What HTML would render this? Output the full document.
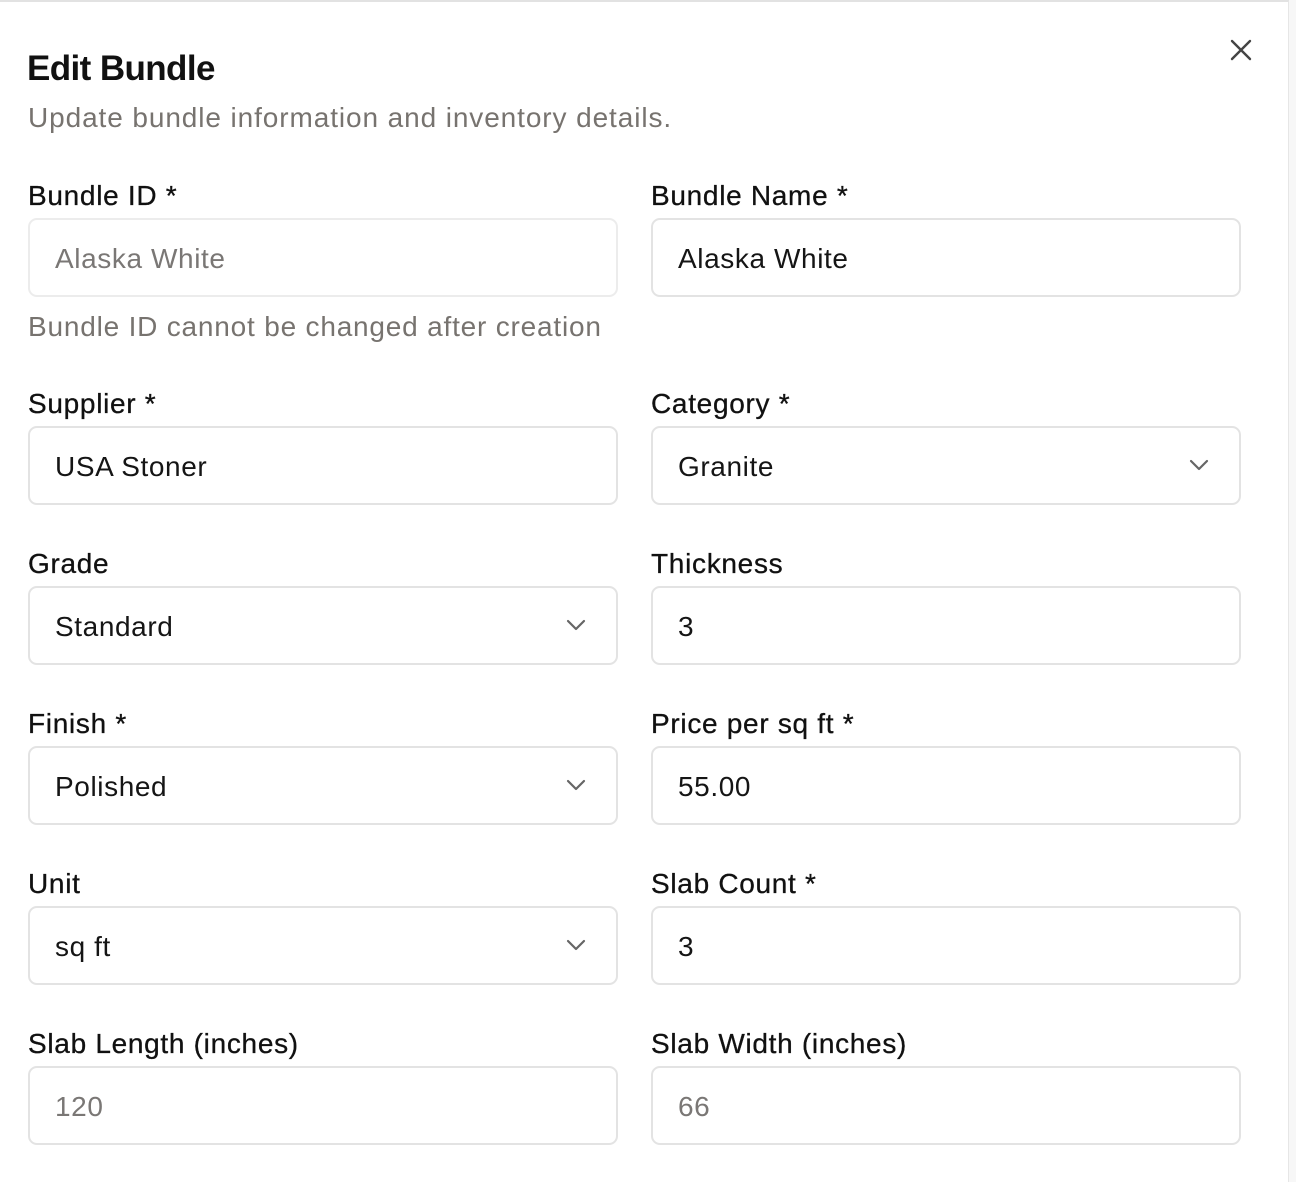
<!DOCTYPE html>
<html><head><meta charset="utf-8"><style>
html,body{margin:0;padding:0;}
body{width:1296px;height:1182px;position:relative;overflow:hidden;background:#f7f7f7;font-family:"Liberation Sans",Arial,sans-serif;}
.modal{position:absolute;left:0;top:0;width:1289px;height:1182px;background:#fff;border-top:2px solid #e2e2e2;border-right:1px solid #e6e6e6;box-sizing:border-box;}
.t{position:absolute;white-space:nowrap;line-height:1;}
.title{left:27px;top:49px;font-size:35px;font-weight:bold;color:#111;letter-spacing:-0.6px;}
.sub{left:28px;top:102px;font-size:28px;letter-spacing:0.9px;color:#77736f;}
.lbl{font-size:28px;letter-spacing:0.7px;color:#111;-webkit-text-stroke:0.3px #111;}
.help{font-size:28px;letter-spacing:0.8px;color:#77736f;}
.in{position:absolute;width:590px;height:79px;box-sizing:border-box;border:2px solid #e3e3e3;border-radius:9px;background:#fff;}
.in span{position:absolute;left:25px;top:25px;font-size:28px;letter-spacing:0.6px;line-height:1;color:#151515;white-space:nowrap;}
.in.dis span,.in.ph span{color:#7a7775;}
.in.dis{border-color:#ececec;}
.in svg{position:absolute;right:30px;top:31px;}
</style></head><body>
<div class="modal">
<svg style="position:absolute;left:1230px;top:37px" width="22" height="22" viewBox="0 0 22 22"><path d="M2 2L20 20M20 2L2 20" stroke="#444" stroke-width="2.4" stroke-linecap="round"/></svg>
<div class="t title">Edit Bundle</div>
<div class="t sub">Update bundle information and inventory details.</div>

<div class="t lbl" style="left:28px;top:180px">Bundle ID *</div>
<div class="t lbl" style="left:651px;top:180px">Bundle Name *</div>
<div class="in dis" style="left:28px;top:216px"><span>Alaska White</span></div>
<div class="in" style="left:651px;top:216px"><span>Alaska White</span></div>
<div class="t help" style="left:28px;top:311px">Bundle ID cannot be changed after creation</div>

<div class="t lbl" style="left:28px;top:388px">Supplier *</div>
<div class="t lbl" style="left:651px;top:388px">Category *</div>
<div class="in" style="left:28px;top:424px"><span>USA Stoner</span></div>
<div class="in" style="left:651px;top:424px"><span>Granite</span><svg width="20" height="12" viewBox="0 0 20 12"><path d="M2 2l8 8 8-8" fill="none" stroke="#666" stroke-width="2.2" stroke-linecap="round" stroke-linejoin="round"/></svg></div>

<div class="t lbl" style="left:28px;top:548px">Grade</div>
<div class="t lbl" style="left:651px;top:548px">Thickness</div>
<div class="in" style="left:28px;top:584px"><span>Standard</span><svg width="20" height="12" viewBox="0 0 20 12"><path d="M2 2l8 8 8-8" fill="none" stroke="#666" stroke-width="2.2" stroke-linecap="round" stroke-linejoin="round"/></svg></div>
<div class="in" style="left:651px;top:584px"><span>3</span></div>

<div class="t lbl" style="left:28px;top:708px">Finish *</div>
<div class="t lbl" style="left:651px;top:708px">Price per sq ft *</div>
<div class="in" style="left:28px;top:744px"><span>Polished</span><svg width="20" height="12" viewBox="0 0 20 12"><path d="M2 2l8 8 8-8" fill="none" stroke="#666" stroke-width="2.2" stroke-linecap="round" stroke-linejoin="round"/></svg></div>
<div class="in" style="left:651px;top:744px"><span>55.00</span></div>

<div class="t lbl" style="left:28px;top:868px">Unit</div>
<div class="t lbl" style="left:651px;top:868px">Slab Count *</div>
<div class="in" style="left:28px;top:904px"><span>sq ft</span><svg width="20" height="12" viewBox="0 0 20 12"><path d="M2 2l8 8 8-8" fill="none" stroke="#666" stroke-width="2.2" stroke-linecap="round" stroke-linejoin="round"/></svg></div>
<div class="in" style="left:651px;top:904px"><span>3</span></div>

<div class="t lbl" style="left:28px;top:1028px">Slab Length (inches)</div>
<div class="t lbl" style="left:651px;top:1028px">Slab Width (inches)</div>
<div class="in ph" style="left:28px;top:1064px"><span>120</span></div>
<div class="in ph" style="left:651px;top:1064px"><span>66</span></div>
</div>
</body></html>
